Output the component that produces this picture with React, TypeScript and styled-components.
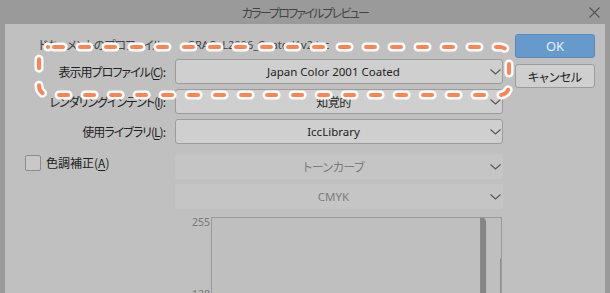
import React from 'react';
import styled, { createGlobalStyle } from 'styled-components';

const GlobalStyle = createGlobalStyle`
    html, body {
        margin: 0;
        padding: 0;
        background: #9a9a9a;
    }
    body {
        font-family: "Noto Sans CJK JP", "Noto Sans", sans-serif;
        font-feature-settings: "palt";
    }
`;

const JP = `"Noto Sans CJK JP", "Noto Sans", sans-serif`;
const LATIN = `"Noto Sans", "Noto Sans CJK JP", sans-serif`;

const Chevron: React.FC = () => (
    <svg width="11" height="6" viewBox="0 0 11 6">
        <polyline points="0.5,0.5 5.5,5 10.5,0.5" fill="none" stroke="#555" strokeWidth="1.1" />
    </svg>
);

interface SelectProps {
    value: string;
    disabled?: boolean;
    latin?: boolean;
}

const Select: React.FC<SelectProps> = ({ value, disabled, latin }) => (
    <SelectBox $disabled={disabled}>
        <SelectValue $disabled={disabled} $latin={latin}>{value}</SelectValue>
        <Chevron />
    </SelectBox>
);

const Label: React.FC<{ text: string; hotkey: string; colon?: boolean; tight?: boolean }> = ({ text, hotkey, colon = true, tight = true }) => (
    <LabelText $tight={tight}>
        {text}(<u>{hotkey}</u>){colon ? ':' : ''}
    </LabelText>
);

const App: React.FC = () => {
    return (
        <>
            <GlobalStyle />
            <Window>
                <TitleBar>
                    <span />
                    <Title>カラープロファイルプレビュー</Title>
                    <CloseButton>
                        <svg width="11" height="11" viewBox="0 0 11 11">
                            <path d="M0.5 0.5 L10.5 10.5 M10.5 0.5 L0.5 10.5" stroke="#555" strokeWidth="1.1" />
                        </svg>
                    </CloseButton>
                </TitleBar>
                <Body>
                    <Form>
                        <Row $height={20}>
                            <InfoLabel $tight>ドキュメントのプロファイル:</InfoLabel>
                            <InfoValue>GRACoL2006_Coated1v2.icc</InfoValue>
                        </Row>
                        <Row $mt={5}>
                            <Label text="表示用プロファイル" hotkey="C" />
                            <Select value="Japan Color 2001 Coated" latin />
                        </Row>
                        <Row $mt={5}>
                            <Label text="レンダリングインテント" hotkey="I" />
                            <Select value="知覚的" />
                        </Row>
                        <Row $mt={5}>
                            <Label text="使用ライブラリ" hotkey="L" />
                            <Select value="IccLibrary" latin />
                        </Row>
                        <Row $mt={10} $align="start">
                            <CheckCell>
                                <CheckBox />
                                <Label text="色調補正" hotkey="A" colon={false} tight={false} />
                            </CheckCell>
                            <Select value="トーンカーブ" disabled />
                        </Row>
                        <Row $mt={5}>
                            <span />
                            <Select value="CMYK" disabled latin />
                        </Row>
                        <Row $mt={8} $align="start">
                            <span />
                            <Chart>
                                <Axis>
                                    <AxisTick $top={0}>255</AxisTick>
                                    <AxisTick $top={72}>128</AxisTick>
                                </Axis>
                                <Plot>
                                    <svg width="100%" height="100%" viewBox="0 0 290 120" preserveAspectRatio="none">
                                        <polygon points="269,0 273,0 275,3 275,120 269,120" fill="#858585" />
                                        <line x1="289.5" y1="45" x2="289.5" y2="120" stroke="#8a8a8a" strokeWidth="1" />
                                    </svg>
                                </Plot>
                            </Chart>
                        </Row>
                    </Form>
                    <Buttons>
                        <Button $primary>OK</Button>
                        <Button>キャンセル</Button>
                    </Buttons>
                </Body>
                <Highlight width="480" height="58" viewBox="0 0 480 58">
                    <rect x="5" y="5" width="470" height="48" rx="9" fill="none" stroke="#fff"
                        strokeWidth="9" strokeDasharray="9 17" strokeLinecap="round" strokeDashoffset="-6" />
                    <rect x="5" y="5" width="470" height="48" rx="9" fill="none" stroke="#ff8453"
                        strokeWidth="4" strokeDasharray="9 17" strokeLinecap="round" strokeDashoffset="-6" />
                </Highlight>
            </Window>
        </>
    );
};

export default App;

const Window = styled.div`
    position: relative;
    width: 610px;
    height: 293px;
    overflow: hidden;
    background: #9a9a9a;
    display: flex;
    flex-direction: column;
`;

const TitleBar = styled.div`
    flex-shrink: 0;
    height: 24px;
    display: grid;
    grid-template-columns: 1fr auto 1fr;
    align-items: center;
`;

const Title = styled.div`
    font-family: ${JP};
    font-size: 12px;
    color: #444;
    letter-spacing: -1.8px;
`;

const CloseButton = styled.div`
    justify-self: end;
    margin-right: 10px;
    display: flex;
    align-items: center;
`;

const Body = styled.div`
    flex: 1;
    min-height: 0;
    overflow: hidden;
    margin: 0 5px;
    background: #c0c0c0;
    padding: 10px 10px 0 0;
    display: grid;
    grid-template-columns: 498px 80px;
    column-gap: 12px;
    align-items: start;
`;

const Form = styled.div`
    display: flex;
    flex-direction: column;
`;

const Row = styled.div<{ $mt?: number; $height?: number; $align?: string }>`
    display: grid;
    grid-template-columns: 160px 328px;
    column-gap: 10px;
    align-items: ${p => p.$align || 'center'};
    margin-top: ${p => p.$mt || 0}px;
    height: ${p => (p.$height ? `${p.$height}px` : 'auto')};
`;

const LabelText = styled.span<{ $tight?: boolean }>`
    font-family: ${JP};
    font-size: 12px;
    color: #222;
    text-align: right;
    white-space: nowrap;
    letter-spacing: ${p => (p.$tight ? '-1px' : '0')};

    u {
        text-decoration-thickness: 1px;
        text-underline-offset: 2px;
    }
`;

const InfoLabel = styled(LabelText)`
    color: #444;
`;

const InfoValue = styled.span`
    font-family: ${LATIN};
    font-size: 11px;
    color: #444;
    padding-left: 12px;
`;

const SelectBox = styled.div<{ $disabled?: boolean }>`
    box-sizing: border-box;
    height: 25px;
    display: flex;
    align-items: center;
    padding: 0 1px 0 1px;
    border-radius: 3px;
    background: ${p => (p.$disabled ? '#c5c5c5' : '#cfcfcf')};
    border: 1px solid ${p => (p.$disabled ? 'transparent' : '#9c9c9c')};
`;

const SelectValue = styled.span<{ $disabled?: boolean; $latin?: boolean }>`
    flex: 1;
    text-align: center;
    font-family: ${p => (p.$latin ? LATIN : JP)};
    font-size: ${p => (p.$latin ? '11.5px' : '12px')};
    color: ${p => (p.$disabled ? '#7c7c7c' : '#222')};
    white-space: nowrap;
    letter-spacing: ${p => (p.$latin ? '0' : '-0.5px')};
`;

const CheckCell = styled.div`
    display: flex;
    align-items: center;
    gap: 5px;
    padding-left: 20px;
`;

const CheckBox = styled.div`
    box-sizing: border-box;
    width: 16px;
    height: 16px;
    border: 1px solid #8c8c8c;
    border-radius: 2px;
    background: #c8c8c8;
`;

const Chart = styled.div`
    display: flex;
    height: 110px;
`;

const Axis = styled.div`
    position: relative;
    width: 36px;
`;

const AxisTick = styled.span<{ $top: number }>`
    position: absolute;
    right: 1px;
    top: ${p => p.$top}px;
    font-family: ${LATIN};
    font-size: 10.5px;
    line-height: 10px;
    color: #777;
`;

const Plot = styled.div`
    box-sizing: border-box;
    width: 291px;
    height: 100%;
    border: 1px solid #9a9a9a;
    background: #bfbfbf;
`;

const Buttons = styled.div`
    display: flex;
    flex-direction: column;
    gap: 6px;
`;

const Button = styled.div<{ $primary?: boolean }>`
    box-sizing: border-box;
    height: 24px;
    display: flex;
    align-items: center;
    justify-content: center;
    border-radius: 3px;
    font-family: ${p => (p.$primary ? LATIN : JP)};
    font-size: ${p => (p.$primary ? '13px' : '12px')};
    color: ${p => (p.$primary ? '#e6eef8' : '#222')};
    background: ${p => (p.$primary ? '#6699cc' : '#cfcfcf')};
    border: 1px solid ${p => (p.$primary ? '#5a88b8' : '#9c9c9c')};
`;

const Highlight = styled.svg`
    position: absolute;
    left: 34px;
    top: 42px;
    pointer-events: none;
`;
